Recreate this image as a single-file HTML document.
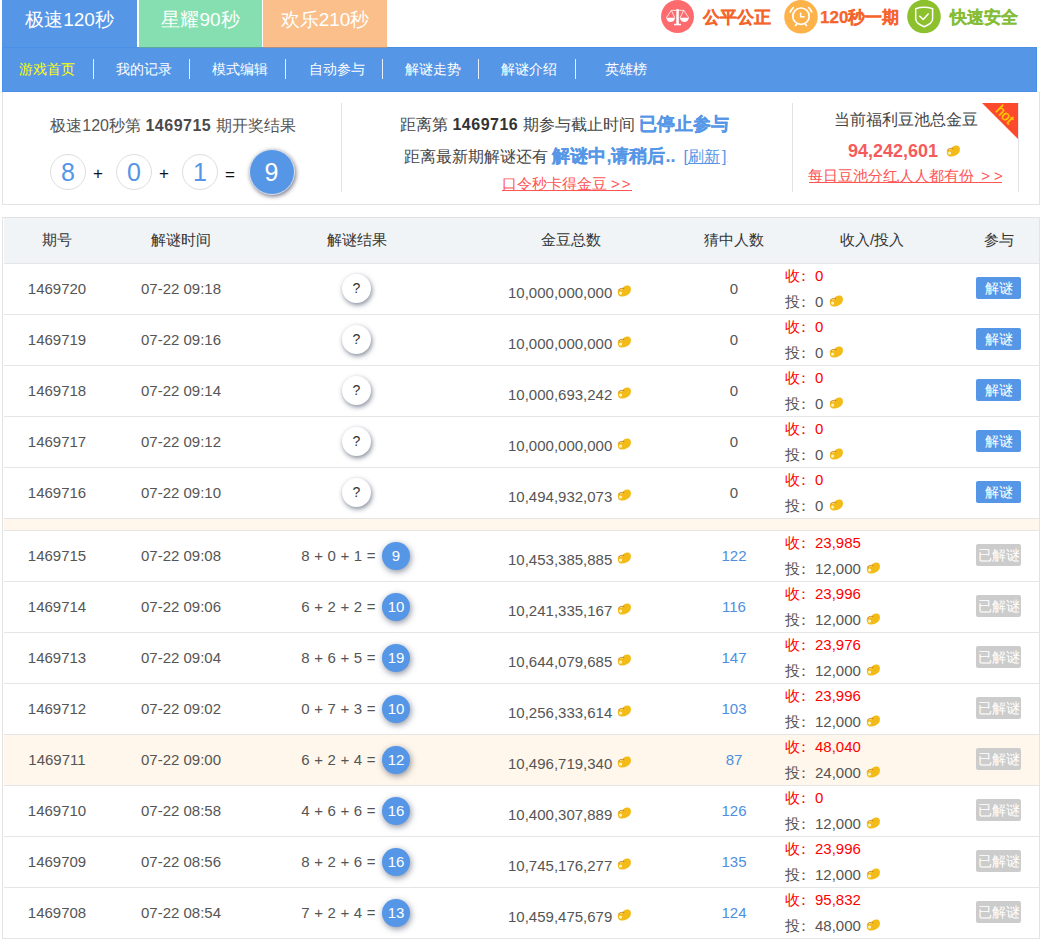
<!DOCTYPE html>
<html><head><meta charset="utf-8"><style>
*{margin:0;padding:0;box-sizing:border-box}
html,body{width:1040px;height:940px;overflow:hidden;background:#fff}
body{position:relative;font-family:"Liberation Sans",sans-serif;color:#555}
.abs{position:absolute}
.tab{position:absolute;top:0;height:47px;color:#fff;font-size:19px;line-height:39px;text-align:center}
.nav{position:absolute;left:2px;top:47px;width:1035px;height:45px;background:#5596e6;border:1px solid #4a8fe8}
.ni{position:absolute;top:-1px;height:45px;line-height:45px;color:#fff;font-size:14px;white-space:nowrap}
.sep{position:absolute;top:11px;width:1px;height:20px;background:#e8f0fb}
.ico{position:absolute;top:0}
.tr{position:absolute;top:1px;height:34px;line-height:34px;font-size:17px;font-weight:bold;white-space:nowrap;-webkit-text-stroke:0.25px currentColor}
.info{position:absolute;left:2px;top:92px;width:1038px;height:113px;border:1px solid #e3e3e3;border-top:none}
.vd{position:absolute;top:11px;width:1px;height:89px;background:#e3e3e3}
.t{position:absolute;height:20px;line-height:20px;font-size:15px;white-space:nowrap}
.c{width:300px;text-align:center}
.g{color:#555}
.b{color:#4d8fe0}
.red{color:#f00}
.red span{color:#f00}
.coin{position:absolute}
.col{font-style:normal;position:relative;left:-4px}
.q{position:absolute;width:29px;height:29px;border-radius:50%;background:#fff;box-shadow:1px 2px 5px rgba(30,40,70,.55);text-align:center;line-height:29px;font-size:14px;color:#333}
.ball{position:absolute;width:28px;height:28px;border-radius:50%;background:#5596e6;box-shadow:1px 2px 6px rgba(30,40,70,.5);text-align:center;line-height:28px;font-size:15px;color:#fff}
.btn{position:absolute;left:976px;width:45px;height:22px;border-radius:2px;background:#5596e6;color:#fff;font-size:14px;line-height:22px;text-align:center;white-space:nowrap;overflow:visible}
.btn.dis{background:#ccc;text-indent:1px}
.tbl{position:absolute;left:2px;top:217px;width:1038px;height:722px;border:1px solid #e3e3e3}
.hdr{position:absolute;left:4px;top:218px;width:1035px;height:45px;background:#f0f4f7}
.row{position:absolute;left:4px;width:1035px;height:52px;border-top:1px solid #e5e5e5;border-bottom:1px solid #e5e5e5}
.cream{background:#fff7eb}
.ht{position:absolute;top:230px;height:20px;line-height:20px;font-size:15px;color:#333;white-space:nowrap;width:200px;text-align:center}
</style></head><body>
<div class="tab" style="left:2px;width:135px;background:#5596e6">极速120秒</div>
<div class="tab" style="left:139px;width:123px;height:48px;background:#86dfb0;border-bottom:1px solid rgba(40,80,140,.4);z-index:2">星耀90秒</div>
<div class="tab" style="left:263px;width:124px;height:48px;background:#fbbf8b;border-bottom:1px solid rgba(40,80,140,.4);z-index:2">欢乐210秒</div>
<div class="ico" style="left:661px"><svg width="33" height="33" viewBox="0 0 33 33"><circle cx="16.5" cy="16.5" r="16.5" fill="#fd6b6e"/>
<g stroke="#fff" fill="none" stroke-width="0.8"><path d="M10.3 10.3 H22.8"/><path d="M10.3 10.3 L5.3 17.9 M10.3 10.3 L13.9 17.9 M22.8 10.3 L19 17.9 M22.8 10.3 L27.8 17.9"/></g>
<rect x="15.3" y="9.2" width="2.5" height="15" fill="#fff"/><rect x="13" y="23.8" width="7" height="1.5" fill="#fff"/>
<path d="M5.3 17.8 H13.9 A4.3 4.1 0 0 1 5.3 17.8Z" fill="#fff"/><path d="M19 17.8 H27.8 A4.4 4.1 0 0 1 19 17.8Z" fill="#fff"/></svg></div>
<div class="tr" style="left:703px;color:#f5652b">公平公正</div>
<div class="ico" style="left:784px"><svg width="34" height="34" viewBox="0 0 34 34"><circle cx="17" cy="16.8" r="16.8" fill="#feb24a"/>
<g stroke="#fff" fill="none" stroke-width="1.7" stroke-linecap="round"><circle cx="17" cy="16.2" r="8.2"/><path d="M16.6 12.4 V16.8 H20.6" stroke-width="1.4" stroke-linecap="butt"/>
<path d="M6.3 11.9 Q7.4 9.2 9.3 7.6"/><path d="M27.7 11.9 Q26.6 9.2 24.7 7.6"/><path d="M12.8 24 L11.6 25.6"/><path d="M21.2 24 L22.4 25.6"/></g></svg></div>
<div class="tr" style="left:820px;color:#f5652b">120秒一期</div>
<div class="ico" style="left:907px"><svg width="34" height="34" viewBox="0 0 34 34"><circle cx="17" cy="16.5" r="16.8" fill="#8cc02c"/>
<path d="M11.8 8.5 Q16 7.2 20.4 7.4 Q24.6 7.6 29 9 M11.8 8.5" stroke="none" fill="none"/>
<path d="M11.9 8.7 Q20 6 28.8 8.7 V18.8 Q28.8 23.5 20.4 26.7 Q11.9 23.5 11.9 18.8 Z" transform="translate(-3.2 0)" stroke="#fff" stroke-width="1.5" fill="none"/>
<path d="M12.3 15.7 L16.2 19.5 L21.6 13.4" stroke="#fff" stroke-width="1.5" fill="none"/></svg></div>
<div class="tr" style="left:950px;color:#86bd37">快速安全</div>
<div class="nav">
<div class="ni" style="left:16px;color:#ffff00">游戏首页</div><div class="sep" style="left:90px"></div>
<div class="ni" style="left:113px">我的记录</div><div class="sep" style="left:186px"></div>
<div class="ni" style="left:209px">模式编辑</div><div class="sep" style="left:282px"></div>
<div class="ni" style="left:306px">自动参与</div><div class="sep" style="left:379px"></div>
<div class="ni" style="left:402px">解谜走势</div><div class="sep" style="left:475px"></div>
<div class="ni" style="left:498px">解谜介绍</div><div class="sep" style="left:572px"></div>
<div class="ni" style="left:602px">英雄榜</div>
</div>
<div class="info">
<div class="vd" style="left:338px"></div>
<div class="vd" style="left:789px"></div>
<div class="vd" style="left:1015px"></div>
</div>
<div class="t c" style="left:23px;top:116px;font-size:16px;color:#555">极速120秒第 <b style="color:#4a4a4a;letter-spacing:0.5px">1469715</b> 期开奖结果</div>
<div class="abs" style="left:50px;top:154px;width:36px;height:36px;border:1px solid #ddd;border-radius:50%;text-align:center;line-height:34px;font-size:25px;color:#5596e6">8</div>
<div class="abs" style="left:116px;top:154px;width:36px;height:36px;border:1px solid #ddd;border-radius:50%;text-align:center;line-height:34px;font-size:25px;color:#5596e6">0</div>
<div class="abs" style="left:182px;top:154px;width:36px;height:36px;border:1px solid #ddd;border-radius:50%;text-align:center;line-height:34px;font-size:25px;color:#5596e6">1</div>
<div class="abs" style="left:88px;top:164px;width:20px;text-align:center;line-height:20px;font-size:17px;color:#111">+</div>
<div class="abs" style="left:154px;top:164px;width:20px;text-align:center;line-height:20px;font-size:17px;color:#111">+</div>
<div class="abs" style="left:220px;top:165px;width:20px;text-align:center;line-height:20px;font-size:17px;color:#111">=</div>
<div class="abs" style="left:248.5px;top:148.5px;width:46px;height:46px;border-radius:50%;background:#5596e6;border:1px solid #dfe3ea;box-shadow:1px 1.5px 4px rgba(30,30,60,.6);text-align:center;line-height:44px;font-size:25px;color:#fff">9</div>
<div class="t" style="left:400px;top:114px;font-size:16px;color:#444">距离第 <b style="color:#333;letter-spacing:0.5px">1469716</b> 期参与截止时间 <b style="color:#5596e6;font-size:18px;-webkit-text-stroke:0.15px currentColor">已停止参与</b></div>
<div class="t" style="left:404px;top:146px;font-size:16px;color:#444">距离最新期解谜还有 <b style="color:#5596e6;font-size:18px;-webkit-text-stroke:0.15px currentColor">解谜中,请稍后..</b><span style="color:#5596e6;margin-left:8px">[<u style="margin-right:2px">刷新</u>]<span style="font-size:6px">.</span></span></div>
<div class="t" style="left:502px;top:174px;font-size:15px;color:#f55">口令秒卡得金豆<span style="margin-left:4px">&gt;</span><span style="margin-left:2px">&gt;</span></div><div class="abs" style="left:502px;top:190px;width:130px;height:1px;background:#f55"></div>
<div class="t c" style="left:756px;top:110px;font-size:16px;color:#444">当前福利豆池总金豆</div>
<div class="t" style="left:848px;top:141px;font-size:18px;font-weight:bold;color:#f55b5b">94,242,601</div>
<svg class="coin" style="left:946px;top:145px" width="15" height="12" viewBox="0 0 15 12"><path d="M0.8 7.4 C0.4 4.6 2.6 3.2 5.4 3.5 C6.6 1 9 0.1 11.4 0.6 C14 1.3 14.6 4.6 13.3 7.3 C11.8 10.4 7.4 11.8 3.8 11.4 C1.8 11.1 1 9.6 0.8 7.4 Z" fill="#f2bb17"/><path d="M1.6 5.4 C2.9 3.6 5.2 2.8 7.2 3.7" stroke="#c47a12" stroke-width="1.1" fill="none" opacity="0.85"/><path d="M2.6 4.9 C3.6 4.2 4.6 4 5.6 4.1" stroke="#fde9a0" stroke-width="0.8" fill="none"/><circle cx="3.6" cy="8.1" r="1.6" fill="#fdf0c2"/></svg>
<div class="t" style="left:808px;top:166px;font-size:15px;color:#f55">每日豆池分红<span style="margin-left:-2px;margin-right:-1px">,</span>人人都有份<span style="margin-left:7px">&gt;</span><span style="margin-left:4px">&gt;</span></div><div class="abs" style="left:809px;top:182px;width:193px;height:1px;background:#f55"></div>
<svg class="abs" style="left:982px;top:103px" width="36" height="36" viewBox="0 0 36 36"><path d="M0 0 H36 V36 Z" fill="#fd4a2c"/><text x="22.2" y="12.2" transform="rotate(45 22.2 12.2)" text-anchor="middle" dominant-baseline="middle" font-family="Liberation Sans" font-size="14" fill="#ffcb00" stroke="#ffcb00" stroke-width="0.35">hot</text></svg>
<div class="tbl"></div>
<div class="hdr"></div>
<div class="ht" style="left:-43px">期号</div>
<div class="ht" style="left:81px">解谜时间</div>
<div class="ht" style="left:257px">解谜结果</div>
<div class="ht" style="left:471px">金豆总数</div>
<div class="ht" style="left:634px">猜中人数</div>
<div class="ht" style="left:772px">收入/投入</div>
<div class="ht" style="left:899px">参与</div>
<div class="row" style="top:263px"></div><div class="t c g" style="left:-93px;top:278.5px">1469720</div><div class="t c g" style="left:31px;top:278.5px">07-22 09:18</div><div class="q" style="left:342px;top:274px">?</div><div class="t g" style="left:508px;top:282.5px">10,000,000,000</div><svg class="coin" style="left:617px;top:285px" width="15" height="12" viewBox="0 0 15 12"><path d="M0.8 7.4 C0.4 4.6 2.6 3.2 5.4 3.5 C6.6 1 9 0.1 11.4 0.6 C14 1.3 14.6 4.6 13.3 7.3 C11.8 10.4 7.4 11.8 3.8 11.4 C1.8 11.1 1 9.6 0.8 7.4 Z" fill="#f2bb17"/><path d="M1.6 5.4 C2.9 3.6 5.2 2.8 7.2 3.7" stroke="#c47a12" stroke-width="1.1" fill="none" opacity="0.85"/><path d="M2.6 4.9 C3.6 4.2 4.6 4 5.6 4.1" stroke="#fde9a0" stroke-width="0.8" fill="none"/><circle cx="3.6" cy="8.1" r="1.6" fill="#fdf0c2"/></svg><div class="t c g" style="left:584px;top:278.5px">0</div><div class="t red" style="left:785px;top:266px">收<i class="col">：</i><span>0</span></div><div class="t g" style="left:785px;top:292px">投<i class="col">：</i>0</div><svg class="coin" style="left:829px;top:295px" width="15" height="12" viewBox="0 0 15 12"><path d="M0.8 7.4 C0.4 4.6 2.6 3.2 5.4 3.5 C6.6 1 9 0.1 11.4 0.6 C14 1.3 14.6 4.6 13.3 7.3 C11.8 10.4 7.4 11.8 3.8 11.4 C1.8 11.1 1 9.6 0.8 7.4 Z" fill="#f2bb17"/><path d="M1.6 5.4 C2.9 3.6 5.2 2.8 7.2 3.7" stroke="#c47a12" stroke-width="1.1" fill="none" opacity="0.85"/><path d="M2.6 4.9 C3.6 4.2 4.6 4 5.6 4.1" stroke="#fde9a0" stroke-width="0.8" fill="none"/><circle cx="3.6" cy="8.1" r="1.6" fill="#fdf0c2"/></svg><div class="btn" style="top:277px">解谜</div><div class="row" style="top:314px"></div><div class="t c g" style="left:-93px;top:329.5px">1469719</div><div class="t c g" style="left:31px;top:329.5px">07-22 09:16</div><div class="q" style="left:342px;top:325px">?</div><div class="t g" style="left:508px;top:333.5px">10,000,000,000</div><svg class="coin" style="left:617px;top:336px" width="15" height="12" viewBox="0 0 15 12"><path d="M0.8 7.4 C0.4 4.6 2.6 3.2 5.4 3.5 C6.6 1 9 0.1 11.4 0.6 C14 1.3 14.6 4.6 13.3 7.3 C11.8 10.4 7.4 11.8 3.8 11.4 C1.8 11.1 1 9.6 0.8 7.4 Z" fill="#f2bb17"/><path d="M1.6 5.4 C2.9 3.6 5.2 2.8 7.2 3.7" stroke="#c47a12" stroke-width="1.1" fill="none" opacity="0.85"/><path d="M2.6 4.9 C3.6 4.2 4.6 4 5.6 4.1" stroke="#fde9a0" stroke-width="0.8" fill="none"/><circle cx="3.6" cy="8.1" r="1.6" fill="#fdf0c2"/></svg><div class="t c g" style="left:584px;top:329.5px">0</div><div class="t red" style="left:785px;top:317px">收<i class="col">：</i><span>0</span></div><div class="t g" style="left:785px;top:343px">投<i class="col">：</i>0</div><svg class="coin" style="left:829px;top:346px" width="15" height="12" viewBox="0 0 15 12"><path d="M0.8 7.4 C0.4 4.6 2.6 3.2 5.4 3.5 C6.6 1 9 0.1 11.4 0.6 C14 1.3 14.6 4.6 13.3 7.3 C11.8 10.4 7.4 11.8 3.8 11.4 C1.8 11.1 1 9.6 0.8 7.4 Z" fill="#f2bb17"/><path d="M1.6 5.4 C2.9 3.6 5.2 2.8 7.2 3.7" stroke="#c47a12" stroke-width="1.1" fill="none" opacity="0.85"/><path d="M2.6 4.9 C3.6 4.2 4.6 4 5.6 4.1" stroke="#fde9a0" stroke-width="0.8" fill="none"/><circle cx="3.6" cy="8.1" r="1.6" fill="#fdf0c2"/></svg><div class="btn" style="top:328px">解谜</div><div class="row" style="top:365px"></div><div class="t c g" style="left:-93px;top:380.5px">1469718</div><div class="t c g" style="left:31px;top:380.5px">07-22 09:14</div><div class="q" style="left:342px;top:376px">?</div><div class="t g" style="left:508px;top:384.5px">10,000,693,242</div><svg class="coin" style="left:617px;top:387px" width="15" height="12" viewBox="0 0 15 12"><path d="M0.8 7.4 C0.4 4.6 2.6 3.2 5.4 3.5 C6.6 1 9 0.1 11.4 0.6 C14 1.3 14.6 4.6 13.3 7.3 C11.8 10.4 7.4 11.8 3.8 11.4 C1.8 11.1 1 9.6 0.8 7.4 Z" fill="#f2bb17"/><path d="M1.6 5.4 C2.9 3.6 5.2 2.8 7.2 3.7" stroke="#c47a12" stroke-width="1.1" fill="none" opacity="0.85"/><path d="M2.6 4.9 C3.6 4.2 4.6 4 5.6 4.1" stroke="#fde9a0" stroke-width="0.8" fill="none"/><circle cx="3.6" cy="8.1" r="1.6" fill="#fdf0c2"/></svg><div class="t c g" style="left:584px;top:380.5px">0</div><div class="t red" style="left:785px;top:368px">收<i class="col">：</i><span>0</span></div><div class="t g" style="left:785px;top:394px">投<i class="col">：</i>0</div><svg class="coin" style="left:829px;top:397px" width="15" height="12" viewBox="0 0 15 12"><path d="M0.8 7.4 C0.4 4.6 2.6 3.2 5.4 3.5 C6.6 1 9 0.1 11.4 0.6 C14 1.3 14.6 4.6 13.3 7.3 C11.8 10.4 7.4 11.8 3.8 11.4 C1.8 11.1 1 9.6 0.8 7.4 Z" fill="#f2bb17"/><path d="M1.6 5.4 C2.9 3.6 5.2 2.8 7.2 3.7" stroke="#c47a12" stroke-width="1.1" fill="none" opacity="0.85"/><path d="M2.6 4.9 C3.6 4.2 4.6 4 5.6 4.1" stroke="#fde9a0" stroke-width="0.8" fill="none"/><circle cx="3.6" cy="8.1" r="1.6" fill="#fdf0c2"/></svg><div class="btn" style="top:379px">解谜</div><div class="row" style="top:416px"></div><div class="t c g" style="left:-93px;top:431.5px">1469717</div><div class="t c g" style="left:31px;top:431.5px">07-22 09:12</div><div class="q" style="left:342px;top:427px">?</div><div class="t g" style="left:508px;top:435.5px">10,000,000,000</div><svg class="coin" style="left:617px;top:438px" width="15" height="12" viewBox="0 0 15 12"><path d="M0.8 7.4 C0.4 4.6 2.6 3.2 5.4 3.5 C6.6 1 9 0.1 11.4 0.6 C14 1.3 14.6 4.6 13.3 7.3 C11.8 10.4 7.4 11.8 3.8 11.4 C1.8 11.1 1 9.6 0.8 7.4 Z" fill="#f2bb17"/><path d="M1.6 5.4 C2.9 3.6 5.2 2.8 7.2 3.7" stroke="#c47a12" stroke-width="1.1" fill="none" opacity="0.85"/><path d="M2.6 4.9 C3.6 4.2 4.6 4 5.6 4.1" stroke="#fde9a0" stroke-width="0.8" fill="none"/><circle cx="3.6" cy="8.1" r="1.6" fill="#fdf0c2"/></svg><div class="t c g" style="left:584px;top:431.5px">0</div><div class="t red" style="left:785px;top:419px">收<i class="col">：</i><span>0</span></div><div class="t g" style="left:785px;top:445px">投<i class="col">：</i>0</div><svg class="coin" style="left:829px;top:448px" width="15" height="12" viewBox="0 0 15 12"><path d="M0.8 7.4 C0.4 4.6 2.6 3.2 5.4 3.5 C6.6 1 9 0.1 11.4 0.6 C14 1.3 14.6 4.6 13.3 7.3 C11.8 10.4 7.4 11.8 3.8 11.4 C1.8 11.1 1 9.6 0.8 7.4 Z" fill="#f2bb17"/><path d="M1.6 5.4 C2.9 3.6 5.2 2.8 7.2 3.7" stroke="#c47a12" stroke-width="1.1" fill="none" opacity="0.85"/><path d="M2.6 4.9 C3.6 4.2 4.6 4 5.6 4.1" stroke="#fde9a0" stroke-width="0.8" fill="none"/><circle cx="3.6" cy="8.1" r="1.6" fill="#fdf0c2"/></svg><div class="btn" style="top:430px">解谜</div><div class="row" style="top:467px"></div><div class="t c g" style="left:-93px;top:482.5px">1469716</div><div class="t c g" style="left:31px;top:482.5px">07-22 09:10</div><div class="q" style="left:342px;top:478px">?</div><div class="t g" style="left:508px;top:486.5px">10,494,932,073</div><svg class="coin" style="left:617px;top:489px" width="15" height="12" viewBox="0 0 15 12"><path d="M0.8 7.4 C0.4 4.6 2.6 3.2 5.4 3.5 C6.6 1 9 0.1 11.4 0.6 C14 1.3 14.6 4.6 13.3 7.3 C11.8 10.4 7.4 11.8 3.8 11.4 C1.8 11.1 1 9.6 0.8 7.4 Z" fill="#f2bb17"/><path d="M1.6 5.4 C2.9 3.6 5.2 2.8 7.2 3.7" stroke="#c47a12" stroke-width="1.1" fill="none" opacity="0.85"/><path d="M2.6 4.9 C3.6 4.2 4.6 4 5.6 4.1" stroke="#fde9a0" stroke-width="0.8" fill="none"/><circle cx="3.6" cy="8.1" r="1.6" fill="#fdf0c2"/></svg><div class="t c g" style="left:584px;top:482.5px">0</div><div class="t red" style="left:785px;top:470px">收<i class="col">：</i><span>0</span></div><div class="t g" style="left:785px;top:496px">投<i class="col">：</i>0</div><svg class="coin" style="left:829px;top:499px" width="15" height="12" viewBox="0 0 15 12"><path d="M0.8 7.4 C0.4 4.6 2.6 3.2 5.4 3.5 C6.6 1 9 0.1 11.4 0.6 C14 1.3 14.6 4.6 13.3 7.3 C11.8 10.4 7.4 11.8 3.8 11.4 C1.8 11.1 1 9.6 0.8 7.4 Z" fill="#f2bb17"/><path d="M1.6 5.4 C2.9 3.6 5.2 2.8 7.2 3.7" stroke="#c47a12" stroke-width="1.1" fill="none" opacity="0.85"/><path d="M2.6 4.9 C3.6 4.2 4.6 4 5.6 4.1" stroke="#fde9a0" stroke-width="0.8" fill="none"/><circle cx="3.6" cy="8.1" r="1.6" fill="#fdf0c2"/></svg><div class="btn" style="top:481px">解谜</div><div class="row cream" style="top:518px;height:13px"></div><div class="row" style="top:530px"></div><div class="t c g" style="left:-93px;top:545.5px">1469715</div><div class="t c g" style="left:31px;top:545.5px">07-22 09:08</div><div class="t g" style="left:200px;width:175.5px;text-align:right;word-spacing:0.4px;top:545.5px">8 + 0 + 1 =</div><div class="ball" style="left:382px;top:542px">9</div><div class="t g" style="left:508px;top:549.5px">10,453,385,885</div><svg class="coin" style="left:617px;top:552px" width="15" height="12" viewBox="0 0 15 12"><path d="M0.8 7.4 C0.4 4.6 2.6 3.2 5.4 3.5 C6.6 1 9 0.1 11.4 0.6 C14 1.3 14.6 4.6 13.3 7.3 C11.8 10.4 7.4 11.8 3.8 11.4 C1.8 11.1 1 9.6 0.8 7.4 Z" fill="#f2bb17"/><path d="M1.6 5.4 C2.9 3.6 5.2 2.8 7.2 3.7" stroke="#c47a12" stroke-width="1.1" fill="none" opacity="0.85"/><path d="M2.6 4.9 C3.6 4.2 4.6 4 5.6 4.1" stroke="#fde9a0" stroke-width="0.8" fill="none"/><circle cx="3.6" cy="8.1" r="1.6" fill="#fdf0c2"/></svg><div class="t c b" style="left:584px;top:545.5px">122</div><div class="t red" style="left:785px;top:533px">收<i class="col">：</i>23,985</div><div class="t g" style="left:785px;top:559px">投<i class="col">：</i>12,000</div><svg class="coin" style="left:866px;top:562px" width="15" height="12" viewBox="0 0 15 12"><path d="M0.8 7.4 C0.4 4.6 2.6 3.2 5.4 3.5 C6.6 1 9 0.1 11.4 0.6 C14 1.3 14.6 4.6 13.3 7.3 C11.8 10.4 7.4 11.8 3.8 11.4 C1.8 11.1 1 9.6 0.8 7.4 Z" fill="#f2bb17"/><path d="M1.6 5.4 C2.9 3.6 5.2 2.8 7.2 3.7" stroke="#c47a12" stroke-width="1.1" fill="none" opacity="0.85"/><path d="M2.6 4.9 C3.6 4.2 4.6 4 5.6 4.1" stroke="#fde9a0" stroke-width="0.8" fill="none"/><circle cx="3.6" cy="8.1" r="1.6" fill="#fdf0c2"/></svg><div class="btn dis" style="top:544px">已解谜</div><div class="row" style="top:581px"></div><div class="t c g" style="left:-93px;top:596.5px">1469714</div><div class="t c g" style="left:31px;top:596.5px">07-22 09:06</div><div class="t g" style="left:200px;width:175.5px;text-align:right;word-spacing:0.4px;top:596.5px">6 + 2 + 2 =</div><div class="ball" style="left:382px;top:593px">10</div><div class="t g" style="left:508px;top:600.5px">10,241,335,167</div><svg class="coin" style="left:617px;top:603px" width="15" height="12" viewBox="0 0 15 12"><path d="M0.8 7.4 C0.4 4.6 2.6 3.2 5.4 3.5 C6.6 1 9 0.1 11.4 0.6 C14 1.3 14.6 4.6 13.3 7.3 C11.8 10.4 7.4 11.8 3.8 11.4 C1.8 11.1 1 9.6 0.8 7.4 Z" fill="#f2bb17"/><path d="M1.6 5.4 C2.9 3.6 5.2 2.8 7.2 3.7" stroke="#c47a12" stroke-width="1.1" fill="none" opacity="0.85"/><path d="M2.6 4.9 C3.6 4.2 4.6 4 5.6 4.1" stroke="#fde9a0" stroke-width="0.8" fill="none"/><circle cx="3.6" cy="8.1" r="1.6" fill="#fdf0c2"/></svg><div class="t c b" style="left:584px;top:596.5px">116</div><div class="t red" style="left:785px;top:584px">收<i class="col">：</i>23,996</div><div class="t g" style="left:785px;top:610px">投<i class="col">：</i>12,000</div><svg class="coin" style="left:866px;top:613px" width="15" height="12" viewBox="0 0 15 12"><path d="M0.8 7.4 C0.4 4.6 2.6 3.2 5.4 3.5 C6.6 1 9 0.1 11.4 0.6 C14 1.3 14.6 4.6 13.3 7.3 C11.8 10.4 7.4 11.8 3.8 11.4 C1.8 11.1 1 9.6 0.8 7.4 Z" fill="#f2bb17"/><path d="M1.6 5.4 C2.9 3.6 5.2 2.8 7.2 3.7" stroke="#c47a12" stroke-width="1.1" fill="none" opacity="0.85"/><path d="M2.6 4.9 C3.6 4.2 4.6 4 5.6 4.1" stroke="#fde9a0" stroke-width="0.8" fill="none"/><circle cx="3.6" cy="8.1" r="1.6" fill="#fdf0c2"/></svg><div class="btn dis" style="top:595px">已解谜</div><div class="row" style="top:632px"></div><div class="t c g" style="left:-93px;top:647.5px">1469713</div><div class="t c g" style="left:31px;top:647.5px">07-22 09:04</div><div class="t g" style="left:200px;width:175.5px;text-align:right;word-spacing:0.4px;top:647.5px">8 + 6 + 5 =</div><div class="ball" style="left:382px;top:644px">19</div><div class="t g" style="left:508px;top:651.5px">10,644,079,685</div><svg class="coin" style="left:617px;top:654px" width="15" height="12" viewBox="0 0 15 12"><path d="M0.8 7.4 C0.4 4.6 2.6 3.2 5.4 3.5 C6.6 1 9 0.1 11.4 0.6 C14 1.3 14.6 4.6 13.3 7.3 C11.8 10.4 7.4 11.8 3.8 11.4 C1.8 11.1 1 9.6 0.8 7.4 Z" fill="#f2bb17"/><path d="M1.6 5.4 C2.9 3.6 5.2 2.8 7.2 3.7" stroke="#c47a12" stroke-width="1.1" fill="none" opacity="0.85"/><path d="M2.6 4.9 C3.6 4.2 4.6 4 5.6 4.1" stroke="#fde9a0" stroke-width="0.8" fill="none"/><circle cx="3.6" cy="8.1" r="1.6" fill="#fdf0c2"/></svg><div class="t c b" style="left:584px;top:647.5px">147</div><div class="t red" style="left:785px;top:635px">收<i class="col">：</i>23,976</div><div class="t g" style="left:785px;top:661px">投<i class="col">：</i>12,000</div><svg class="coin" style="left:866px;top:664px" width="15" height="12" viewBox="0 0 15 12"><path d="M0.8 7.4 C0.4 4.6 2.6 3.2 5.4 3.5 C6.6 1 9 0.1 11.4 0.6 C14 1.3 14.6 4.6 13.3 7.3 C11.8 10.4 7.4 11.8 3.8 11.4 C1.8 11.1 1 9.6 0.8 7.4 Z" fill="#f2bb17"/><path d="M1.6 5.4 C2.9 3.6 5.2 2.8 7.2 3.7" stroke="#c47a12" stroke-width="1.1" fill="none" opacity="0.85"/><path d="M2.6 4.9 C3.6 4.2 4.6 4 5.6 4.1" stroke="#fde9a0" stroke-width="0.8" fill="none"/><circle cx="3.6" cy="8.1" r="1.6" fill="#fdf0c2"/></svg><div class="btn dis" style="top:646px">已解谜</div><div class="row" style="top:683px"></div><div class="t c g" style="left:-93px;top:698.5px">1469712</div><div class="t c g" style="left:31px;top:698.5px">07-22 09:02</div><div class="t g" style="left:200px;width:175.5px;text-align:right;word-spacing:0.4px;top:698.5px">0 + 7 + 3 =</div><div class="ball" style="left:382px;top:695px">10</div><div class="t g" style="left:508px;top:702.5px">10,256,333,614</div><svg class="coin" style="left:617px;top:705px" width="15" height="12" viewBox="0 0 15 12"><path d="M0.8 7.4 C0.4 4.6 2.6 3.2 5.4 3.5 C6.6 1 9 0.1 11.4 0.6 C14 1.3 14.6 4.6 13.3 7.3 C11.8 10.4 7.4 11.8 3.8 11.4 C1.8 11.1 1 9.6 0.8 7.4 Z" fill="#f2bb17"/><path d="M1.6 5.4 C2.9 3.6 5.2 2.8 7.2 3.7" stroke="#c47a12" stroke-width="1.1" fill="none" opacity="0.85"/><path d="M2.6 4.9 C3.6 4.2 4.6 4 5.6 4.1" stroke="#fde9a0" stroke-width="0.8" fill="none"/><circle cx="3.6" cy="8.1" r="1.6" fill="#fdf0c2"/></svg><div class="t c b" style="left:584px;top:698.5px">103</div><div class="t red" style="left:785px;top:686px">收<i class="col">：</i>23,996</div><div class="t g" style="left:785px;top:712px">投<i class="col">：</i>12,000</div><svg class="coin" style="left:866px;top:715px" width="15" height="12" viewBox="0 0 15 12"><path d="M0.8 7.4 C0.4 4.6 2.6 3.2 5.4 3.5 C6.6 1 9 0.1 11.4 0.6 C14 1.3 14.6 4.6 13.3 7.3 C11.8 10.4 7.4 11.8 3.8 11.4 C1.8 11.1 1 9.6 0.8 7.4 Z" fill="#f2bb17"/><path d="M1.6 5.4 C2.9 3.6 5.2 2.8 7.2 3.7" stroke="#c47a12" stroke-width="1.1" fill="none" opacity="0.85"/><path d="M2.6 4.9 C3.6 4.2 4.6 4 5.6 4.1" stroke="#fde9a0" stroke-width="0.8" fill="none"/><circle cx="3.6" cy="8.1" r="1.6" fill="#fdf0c2"/></svg><div class="btn dis" style="top:697px">已解谜</div><div class="row cream" style="top:734px"></div><div class="t c g" style="left:-93px;top:749.5px">1469711</div><div class="t c g" style="left:31px;top:749.5px">07-22 09:00</div><div class="t g" style="left:200px;width:175.5px;text-align:right;word-spacing:0.4px;top:749.5px">6 + 2 + 4 =</div><div class="ball" style="left:382px;top:746px">12</div><div class="t g" style="left:508px;top:753.5px">10,496,719,340</div><svg class="coin" style="left:617px;top:756px" width="15" height="12" viewBox="0 0 15 12"><path d="M0.8 7.4 C0.4 4.6 2.6 3.2 5.4 3.5 C6.6 1 9 0.1 11.4 0.6 C14 1.3 14.6 4.6 13.3 7.3 C11.8 10.4 7.4 11.8 3.8 11.4 C1.8 11.1 1 9.6 0.8 7.4 Z" fill="#f2bb17"/><path d="M1.6 5.4 C2.9 3.6 5.2 2.8 7.2 3.7" stroke="#c47a12" stroke-width="1.1" fill="none" opacity="0.85"/><path d="M2.6 4.9 C3.6 4.2 4.6 4 5.6 4.1" stroke="#fde9a0" stroke-width="0.8" fill="none"/><circle cx="3.6" cy="8.1" r="1.6" fill="#fdf0c2"/></svg><div class="t c b" style="left:584px;top:749.5px">87</div><div class="t red" style="left:785px;top:737px">收<i class="col">：</i>48,040</div><div class="t g" style="left:785px;top:763px">投<i class="col">：</i>24,000</div><svg class="coin" style="left:866px;top:766px" width="15" height="12" viewBox="0 0 15 12"><path d="M0.8 7.4 C0.4 4.6 2.6 3.2 5.4 3.5 C6.6 1 9 0.1 11.4 0.6 C14 1.3 14.6 4.6 13.3 7.3 C11.8 10.4 7.4 11.8 3.8 11.4 C1.8 11.1 1 9.6 0.8 7.4 Z" fill="#f2bb17"/><path d="M1.6 5.4 C2.9 3.6 5.2 2.8 7.2 3.7" stroke="#c47a12" stroke-width="1.1" fill="none" opacity="0.85"/><path d="M2.6 4.9 C3.6 4.2 4.6 4 5.6 4.1" stroke="#fde9a0" stroke-width="0.8" fill="none"/><circle cx="3.6" cy="8.1" r="1.6" fill="#fdf0c2"/></svg><div class="btn dis" style="top:748px">已解谜</div><div class="row" style="top:785px"></div><div class="t c g" style="left:-93px;top:800.5px">1469710</div><div class="t c g" style="left:31px;top:800.5px">07-22 08:58</div><div class="t g" style="left:200px;width:175.5px;text-align:right;word-spacing:0.4px;top:800.5px">4 + 6 + 6 =</div><div class="ball" style="left:382px;top:797px">16</div><div class="t g" style="left:508px;top:804.5px">10,400,307,889</div><svg class="coin" style="left:617px;top:807px" width="15" height="12" viewBox="0 0 15 12"><path d="M0.8 7.4 C0.4 4.6 2.6 3.2 5.4 3.5 C6.6 1 9 0.1 11.4 0.6 C14 1.3 14.6 4.6 13.3 7.3 C11.8 10.4 7.4 11.8 3.8 11.4 C1.8 11.1 1 9.6 0.8 7.4 Z" fill="#f2bb17"/><path d="M1.6 5.4 C2.9 3.6 5.2 2.8 7.2 3.7" stroke="#c47a12" stroke-width="1.1" fill="none" opacity="0.85"/><path d="M2.6 4.9 C3.6 4.2 4.6 4 5.6 4.1" stroke="#fde9a0" stroke-width="0.8" fill="none"/><circle cx="3.6" cy="8.1" r="1.6" fill="#fdf0c2"/></svg><div class="t c b" style="left:584px;top:800.5px">126</div><div class="t red" style="left:785px;top:788px">收<i class="col">：</i>0</div><div class="t g" style="left:785px;top:814px">投<i class="col">：</i>12,000</div><svg class="coin" style="left:866px;top:817px" width="15" height="12" viewBox="0 0 15 12"><path d="M0.8 7.4 C0.4 4.6 2.6 3.2 5.4 3.5 C6.6 1 9 0.1 11.4 0.6 C14 1.3 14.6 4.6 13.3 7.3 C11.8 10.4 7.4 11.8 3.8 11.4 C1.8 11.1 1 9.6 0.8 7.4 Z" fill="#f2bb17"/><path d="M1.6 5.4 C2.9 3.6 5.2 2.8 7.2 3.7" stroke="#c47a12" stroke-width="1.1" fill="none" opacity="0.85"/><path d="M2.6 4.9 C3.6 4.2 4.6 4 5.6 4.1" stroke="#fde9a0" stroke-width="0.8" fill="none"/><circle cx="3.6" cy="8.1" r="1.6" fill="#fdf0c2"/></svg><div class="btn dis" style="top:799px">已解谜</div><div class="row" style="top:836px"></div><div class="t c g" style="left:-93px;top:851.5px">1469709</div><div class="t c g" style="left:31px;top:851.5px">07-22 08:56</div><div class="t g" style="left:200px;width:175.5px;text-align:right;word-spacing:0.4px;top:851.5px">8 + 2 + 6 =</div><div class="ball" style="left:382px;top:848px">16</div><div class="t g" style="left:508px;top:855.5px">10,745,176,277</div><svg class="coin" style="left:617px;top:858px" width="15" height="12" viewBox="0 0 15 12"><path d="M0.8 7.4 C0.4 4.6 2.6 3.2 5.4 3.5 C6.6 1 9 0.1 11.4 0.6 C14 1.3 14.6 4.6 13.3 7.3 C11.8 10.4 7.4 11.8 3.8 11.4 C1.8 11.1 1 9.6 0.8 7.4 Z" fill="#f2bb17"/><path d="M1.6 5.4 C2.9 3.6 5.2 2.8 7.2 3.7" stroke="#c47a12" stroke-width="1.1" fill="none" opacity="0.85"/><path d="M2.6 4.9 C3.6 4.2 4.6 4 5.6 4.1" stroke="#fde9a0" stroke-width="0.8" fill="none"/><circle cx="3.6" cy="8.1" r="1.6" fill="#fdf0c2"/></svg><div class="t c b" style="left:584px;top:851.5px">135</div><div class="t red" style="left:785px;top:839px">收<i class="col">：</i>23,996</div><div class="t g" style="left:785px;top:865px">投<i class="col">：</i>12,000</div><svg class="coin" style="left:866px;top:868px" width="15" height="12" viewBox="0 0 15 12"><path d="M0.8 7.4 C0.4 4.6 2.6 3.2 5.4 3.5 C6.6 1 9 0.1 11.4 0.6 C14 1.3 14.6 4.6 13.3 7.3 C11.8 10.4 7.4 11.8 3.8 11.4 C1.8 11.1 1 9.6 0.8 7.4 Z" fill="#f2bb17"/><path d="M1.6 5.4 C2.9 3.6 5.2 2.8 7.2 3.7" stroke="#c47a12" stroke-width="1.1" fill="none" opacity="0.85"/><path d="M2.6 4.9 C3.6 4.2 4.6 4 5.6 4.1" stroke="#fde9a0" stroke-width="0.8" fill="none"/><circle cx="3.6" cy="8.1" r="1.6" fill="#fdf0c2"/></svg><div class="btn dis" style="top:850px">已解谜</div><div class="row" style="top:887px"></div><div class="t c g" style="left:-93px;top:902.5px">1469708</div><div class="t c g" style="left:31px;top:902.5px">07-22 08:54</div><div class="t g" style="left:200px;width:175.5px;text-align:right;word-spacing:0.4px;top:902.5px">7 + 2 + 4 =</div><div class="ball" style="left:382px;top:899px">13</div><div class="t g" style="left:508px;top:906.5px">10,459,475,679</div><svg class="coin" style="left:617px;top:909px" width="15" height="12" viewBox="0 0 15 12"><path d="M0.8 7.4 C0.4 4.6 2.6 3.2 5.4 3.5 C6.6 1 9 0.1 11.4 0.6 C14 1.3 14.6 4.6 13.3 7.3 C11.8 10.4 7.4 11.8 3.8 11.4 C1.8 11.1 1 9.6 0.8 7.4 Z" fill="#f2bb17"/><path d="M1.6 5.4 C2.9 3.6 5.2 2.8 7.2 3.7" stroke="#c47a12" stroke-width="1.1" fill="none" opacity="0.85"/><path d="M2.6 4.9 C3.6 4.2 4.6 4 5.6 4.1" stroke="#fde9a0" stroke-width="0.8" fill="none"/><circle cx="3.6" cy="8.1" r="1.6" fill="#fdf0c2"/></svg><div class="t c b" style="left:584px;top:902.5px">124</div><div class="t red" style="left:785px;top:890px">收<i class="col">：</i>95,832</div><div class="t g" style="left:785px;top:916px">投<i class="col">：</i>48,000</div><svg class="coin" style="left:866px;top:919px" width="15" height="12" viewBox="0 0 15 12"><path d="M0.8 7.4 C0.4 4.6 2.6 3.2 5.4 3.5 C6.6 1 9 0.1 11.4 0.6 C14 1.3 14.6 4.6 13.3 7.3 C11.8 10.4 7.4 11.8 3.8 11.4 C1.8 11.1 1 9.6 0.8 7.4 Z" fill="#f2bb17"/><path d="M1.6 5.4 C2.9 3.6 5.2 2.8 7.2 3.7" stroke="#c47a12" stroke-width="1.1" fill="none" opacity="0.85"/><path d="M2.6 4.9 C3.6 4.2 4.6 4 5.6 4.1" stroke="#fde9a0" stroke-width="0.8" fill="none"/><circle cx="3.6" cy="8.1" r="1.6" fill="#fdf0c2"/></svg><div class="btn dis" style="top:901px">已解谜</div>
</body></html>
